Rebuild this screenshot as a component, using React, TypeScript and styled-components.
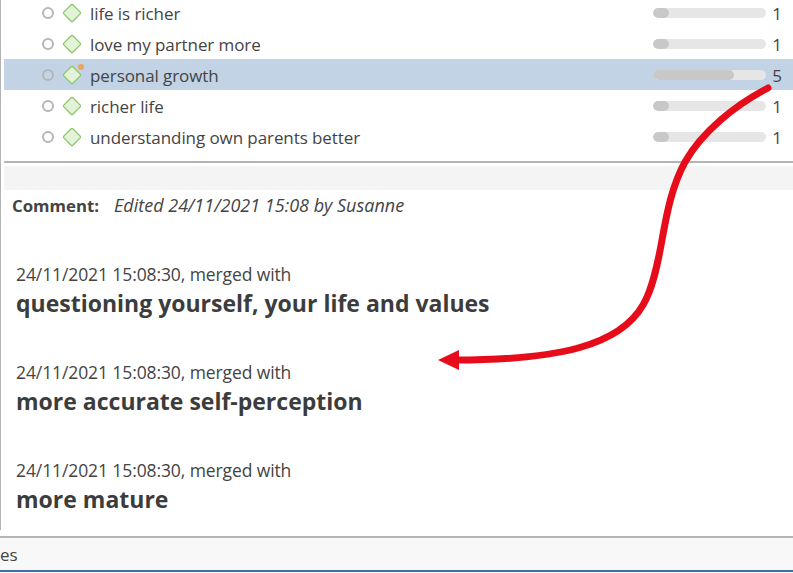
import React from "react";
import styled, { createGlobalStyle } from "styled-components";

const Global = createGlobalStyle`
  html, body { margin: 0; padding: 0; background: #fff; }
  body { font-family: "Open Sans", "Noto Sans", "Liberation Sans", sans-serif; color: #444; overflow: hidden; }
`;

const Page = styled.div`
  position: relative;
  width: 793px;
  height: 573px;
  overflow: hidden;
  display: flex;
  flex-direction: column;
`;

const Main = styled.main`
  height: 530px;
  flex: none;
  border-left: 1px solid #b4b4b4;
  padding-left: 3px;
  box-sizing: border-box;
  overflow: hidden;
`;

const List = styled.div`
  margin-top: -3px;
  display: flex;
  flex-direction: column;
`;

const Row = styled.div<{ $selected?: boolean }>`
  height: 31px;
  display: flex;
  align-items: center;
  padding-left: 38px;
  padding-right: 11px;
  background: ${(p) => (p.$selected ? "#c2d3e6" : "transparent")};
`;

const Radio = styled.span`
  width: 12px;
  height: 12px;
  box-sizing: border-box;
  border: 2px solid #b6b6b6;
  border-radius: 50%;
  flex: none;
`;

const CodeIcon = styled.span`
  position: relative;
  width: 20px;
  height: 20px;
  margin-left: 8px;
  flex: none;
`;

const Badge = styled.span`
  position: absolute;
  top: -1px;
  right: -2px;
  width: 6px;
  height: 6px;
  border-radius: 50%;
  background: #eca45f;
`;

const Label = styled.span`
  margin: 2px 0 0 8px;
  flex: 1;
  font-size: 17px;
  letter-spacing: -0.08px;
  white-space: nowrap;
`;

const Track = styled.div`
  width: 113px;
  height: 10px;
  border-radius: 5px;
  background: #e6e6e6;
  flex: none;
  overflow: hidden;
`;

const Fill = styled.div`
  height: 100%;
  border-radius: 5px;
  background: #c8c8c8;
`;

const Count = styled.span`
  width: 16px;
  margin-top: 2px;
  flex: none;
  text-align: right;
  font-size: 17px;
`;

const Divider = styled.hr`
  margin: 9px 0 0;
  border: 0;
  height: 2px;
  background: #b5b5b5;
`;

const Band = styled.div`
  height: 24px;
  margin-top: 3px;
  background: #f4f4f4;
`;

const CommentRow = styled.div`
  display: flex;
  align-items: baseline;
  padding: 4px 0 0 8px;
  height: 23px;
  line-height: 23px;
  font-size: 18px;
`;

const CommentLabel = styled.strong`
  width: 102px;
  flex: none;
  font-weight: 700;
  font-size: 16.8px;
`;

const CommentText = styled.em`
  font-style: italic;
`;

const Entries = styled.div`
  padding: 45px 0 0 12px;
  display: flex;
  flex-direction: column;
  gap: 40px;
`;

const Entry = styled.div`
  display: flex;
  flex-direction: column;
`;

const Stamp = styled.div`
  height: 24px;
  line-height: 24px;
  font-size: 17.5px;
  letter-spacing: -0.1px;
`;

const Title = styled.div`
  height: 34px;
  line-height: 34px;
  font-size: 23px;
  font-weight: 700;
  color: #3c3c3c;
`;

const Footer = styled.footer`
  margin-top: 6px;
  height: 36px;
  flex: none;
  box-sizing: border-box;
  border-top: 2px solid #b5b5b5;
  border-bottom: 2px solid #3d6fa5;
  background: #f8f8f8;
  display: flex;
  align-items: center;
  font-size: 17px;
`;

const Overlay = styled.svg`
  position: absolute;
  inset: 0;
  pointer-events: none;
`;

const Diamond = () => (
  <svg width="20" height="20" viewBox="0 0 20 20">
    <rect x="3.6" y="3.6" width="12.8" height="12.8" rx="1.2" transform="rotate(45 10 10)" fill="#e3f2d8" stroke="#8bc76a" strokeWidth="1.3" />
  </svg>
);

const rows = [
  { label: "life is richer", count: 1 },
  { label: "love my partner more", count: 1 },
  { label: "personal growth", count: 5, selected: true },
  { label: "richer life", count: 1 },
  { label: "understanding own parents better", count: 1 },
];

const entries = [
  "questioning yourself, your life and values",
  "more accurate self-perception",
  "more mature",
];

export default function App() {
  return (
    <Page>
      <Global />
      <Main>
        <List>
          {rows.map((r) => (
            <Row key={r.label} $selected={r.selected}>
              <Radio />
              <CodeIcon>
                <Diamond />
                {r.selected && <Badge />}
              </CodeIcon>
              <Label>{r.label}</Label>
              <Track>
                <Fill style={{ width: r.count === 5 ? 81 : 16 }} />
              </Track>
              <Count>{r.count}</Count>
            </Row>
          ))}
        </List>
        <Divider />
        <Band />
        <CommentRow>
          <CommentLabel>Comment:</CommentLabel>
          <CommentText>Edited 24/11/2021 15:08 by Susanne</CommentText>
        </CommentRow>
        <Entries>
          {entries.map((e) => (
            <Entry key={e}>
              <Stamp>24/11/2021 15:08:30, merged with</Stamp>
              <Title>{e}</Title>
            </Entry>
          ))}
        </Entries>
      </Main>
      <Footer>es</Footer>
      <Overlay width="793" height="573" viewBox="0 0 793 573">
        <path
          d="M768 88 C735 105 702 132 685 162 C672 186 667 212 662 240 C657 268 652 290 643 305 C620 345 560 360 455 360"
          fill="none"
          stroke="#e60c1a"
          strokeWidth="7"
          strokeLinecap="round"
        />
        <polygon points="438,360 459,350 459,370" fill="#e60c1a" />
      </Overlay>
    </Page>
  );
}
